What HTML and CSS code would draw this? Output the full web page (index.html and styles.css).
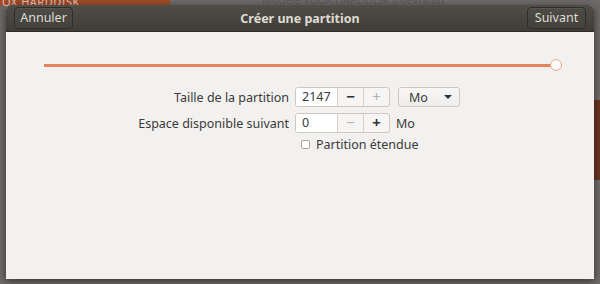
FILE: index.html
```html
<!DOCTYPE html>
<html lang="fr">
<head>
  <meta charset="UTF-8">
  <title>Créer une partition</title>
  <link rel="stylesheet" href="styles.css">
</head>
<body>
<div id="desktop">
  <div class="behind-title">OX HARDDISK</div>
  <div class="behind-caption">Modèle VBOX HARDDISK (/dev/sda)</div>
  <div class="behind-edge"></div>

  <div id="dialog">
    <div class="header">
      <span class="hbtn">Annuler</span>
      <span class="title">Créer une partition</span>
      <span class="hbtn">Suivant</span>
    </div>

    <div class="content">
      <div class="slider">
        <div class="track"></div>
        <div class="knob"></div>
      </div>

      <div class="form">
        <label>Taille de la partition</label>
        <div class="row">
          <div class="spin">
            <span class="entry">2147</span>
            <span class="sbtn">&minus;</span>
            <span class="sbtn off">+</span>
          </div>
          <div class="combo">
            <span>Mo</span>
            <span class="arrow"></span>
          </div>
        </div>

        <label>Espace disponible suivant</label>
        <div class="row">
          <div class="spin">
            <span class="entry">0</span>
            <span class="sbtn off">&minus;</span>
            <span class="sbtn">+</span>
          </div>
          <span class="unit">Mo</span>
        </div>

        <span></span>
        <div class="check">
          <span class="box"></span>
          <span>Partition étendue</span>
        </div>
      </div>
    </div>
  </div>
</div>
</body>
</html>
```

FILE: styles.css
```css
* {
  margin: 0;
  padding: 0;
  box-sizing: border-box;
}

body {
  width: 600px;
  height: 284px;
  overflow: hidden;
  background: #6d6c6a;
  font-family: "Noto Sans", "Open Sans", sans-serif;
  font-size: 12.5px;
  color: #3a3a3a;
}

#desktop {
  position: relative;
  width: 600px;
  height: 284px;
  padding: 5px 6px 0 6px;
}

/* windows behind the dialog */
.behind-title {
  position: absolute;
  left: 0;
  top: 0;
  width: 170px;
  height: 6px;
  background: #a04a2a;
  color: #e4c6b8;
  font-size: 11px;
  line-height: 4px;
  overflow: hidden;
  padding-left: 2px;
  letter-spacing: 0.5px;
}

.behind-caption {
  position: absolute;
  left: 262px;
  top: -8px;
  color: #4a4a4a;
  font-size: 11px;
  opacity: 0.5;
}

.behind-edge {
  position: absolute;
  right: 0;
  top: 100px;
  width: 6px;
  height: 80px;
  background: #6b3520;
}

#dialog {
  position: relative;
  width: 588px;
  height: 274px;
  background: #f2f1ef;
  border-radius: 5px 5px 0 0;
  box-shadow: 0 2px 8px rgba(0, 0, 0, 0.55);
  overflow: hidden;
}

.header {
  height: 27px;
  display: flex;
  align-items: center;
  justify-content: space-between;
  padding: 0 8px 0 8px;
  background: linear-gradient(#514e48, #3f3d38);
  border-bottom: 1px solid #2e2d2a;
}

.title {
  color: #dfdbd2;
  font-weight: bold;
  font-size: 12.5px;
}

.hbtn {
  height: 22px;
  line-height: 20px;
  width: 59px;
  text-align: center;
  color: #dfdbd2;
  border: 1px solid #2f2e2b;
  border-radius: 4px;
  background: linear-gradient(#4e4b45, #44423d);
  box-shadow: inset 0 1px rgba(255, 255, 255, 0.06);
}

.content {
  padding-top: 27px;
}

.slider {
  display: flex;
  align-items: center;
  height: 12px;
  margin: 0 32px 0 38px;
}

.track {
  flex: 1;
  height: 3px;
  background: #e5835b;
}

.knob {
  width: 12px;
  height: 12px;
  margin-left: -6px;
  border-radius: 50%;
  background: #fbfaf9;
  border: 1px solid #eca88c;
}

.form {
  display: grid;
  grid-template-columns: 283px auto;
  column-gap: 6px;
  row-gap: 6px;
  margin-top: 16px;
  align-items: center;
}

.form label {
  text-align: right;
}

.row {
  display: flex;
  align-items: center;
  height: 20px;
}

.spin {
  display: flex;
  width: 95px;
  height: 20px;
  border: 1px solid #cdc8c2;
  border-radius: 3px;
  overflow: hidden;
  background: #f6f5f4;
}

.entry {
  width: 41px;
  padding-left: 6px;
  line-height: 18px;
  background: #fff;
  color: #3a3a3a;
}

.sbtn {
  flex: 1;
  text-align: center;
  line-height: 17px;
  font-size: 15px;
  border-left: 1px solid #d6d1cc;
  color: #2e3436;
  font-weight: bold;
}

.sbtn.off {
  color: #b6b1ab;
  font-weight: normal;
}

.combo {
  display: flex;
  align-items: center;
  justify-content: space-between;
  width: 62px;
  height: 20px;
  margin-left: 8px;
  padding: 0 7px 0 10px;
  border: 1px solid #cdc8c2;
  border-radius: 3px;
  background: linear-gradient(#f8f7f6, #efeeec);
}

.arrow {
  width: 0;
  height: 0;
  border-left: 4px solid transparent;
  border-right: 4px solid transparent;
  border-top: 4px solid #2e3436;
}

.unit {
  margin-left: 6px;
}

.check {
  display: flex;
  align-items: center;
  height: 16px;
  padding-left: 6px;
  margin-top: -3px;
}

.box {
  width: 9px;
  height: 9px;
  margin-right: 6px;
  border: 1px solid #a9a49e;
  border-radius: 2px;
  background: #fff;
}
```
